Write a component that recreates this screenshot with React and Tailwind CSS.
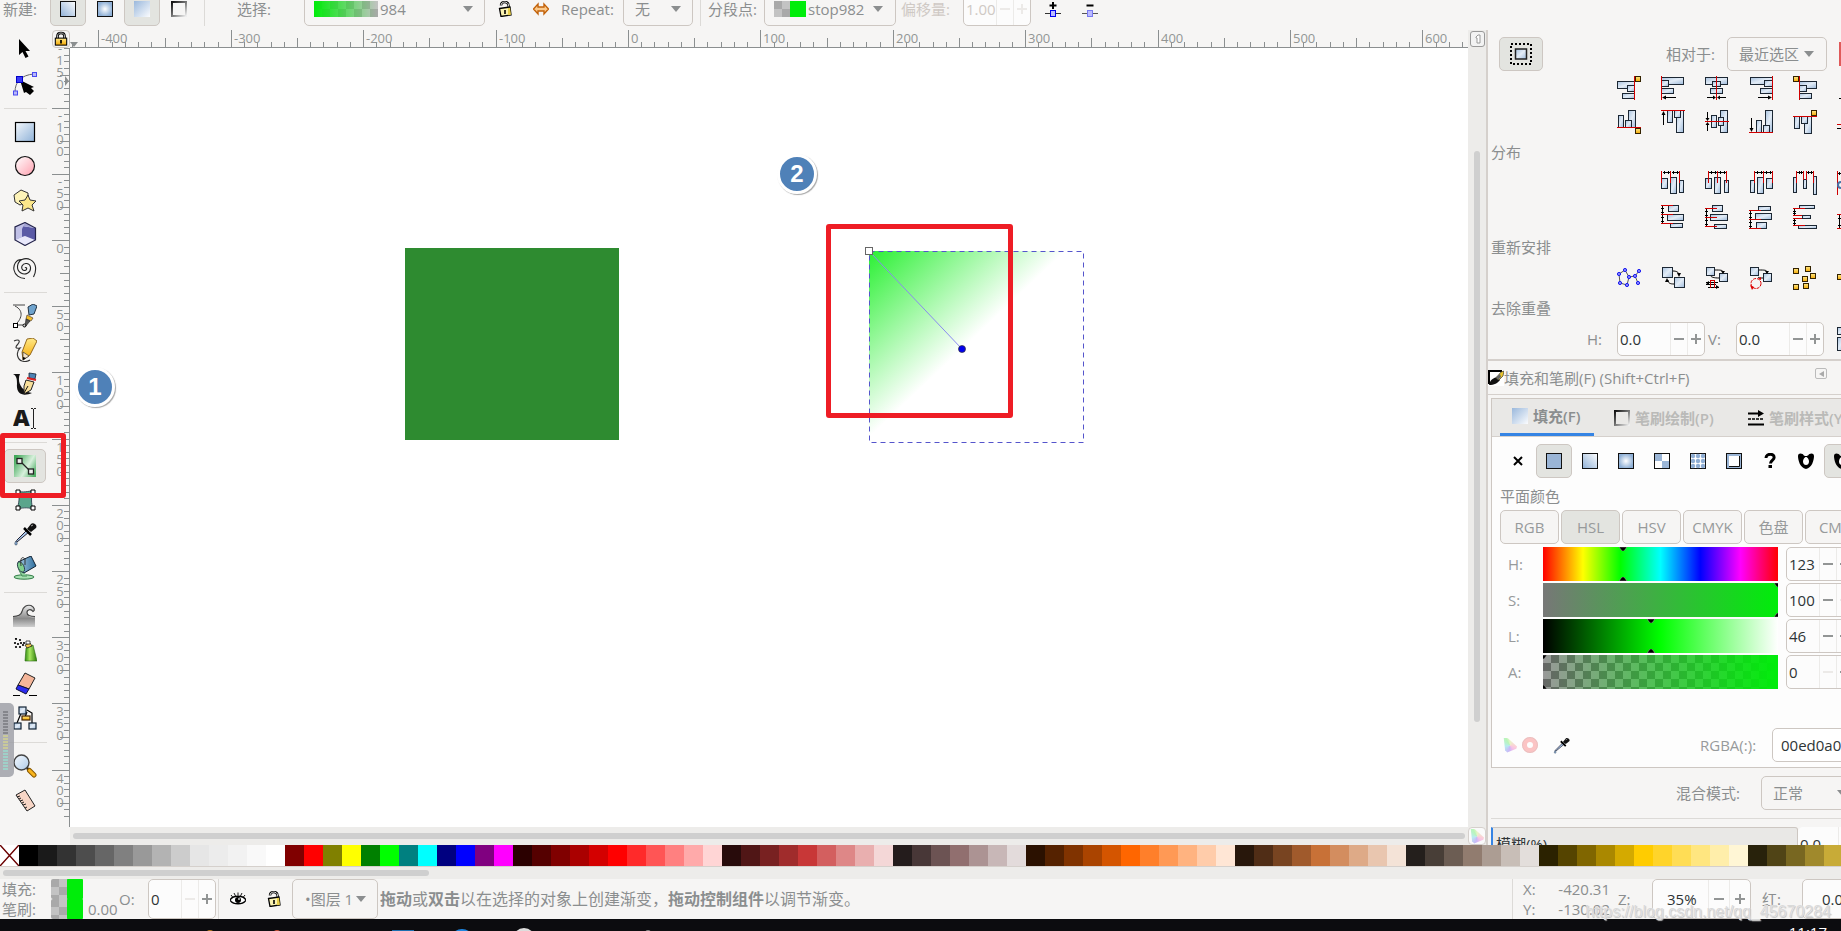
import React from "react";

/* ---------- shared pieces ---------- */

function Caret() {
  return (
    <svg className="pointer-events-none shrink-0" width="10" height="6" viewBox="0 0 10 6" aria-hidden="true">
      <path d="M0 0h10L5 6z" fill="#8b8e8f" />
    </svg>
  );
}

function Combo({ label, value, options, chip, className, selectClass }) {
  return (
    <div className={"flex h-[34px] shrink-0 items-center rounded-[5px] border border-[#cdc7c2] bg-[#f6f5f4] " + className}>
      {chip}
      <select aria-label={label} defaultValue={value} className={"min-w-0 appearance-none bg-transparent text-[15px] outline-none " + selectClass}>
        {(options || [value]).map((o) => (
          <option key={o}>{o}</option>
        ))}
      </select>
      <Caret />
    </div>
  );
}

function Spin({ label, value, className, step, minusOff, plusOff, disabled }) {
  return (
    <div className={"flex shrink-0 items-stretch overflow-hidden rounded-[5px] border border-[#cdc7c2] bg-[#fcfcfc] " + className}>
      <input
        aria-label={label}
        defaultValue={value}
        disabled={disabled}
        className={"w-0 min-w-0 flex-1 bg-transparent pl-[2px] text-[15px] outline-none " + (disabled ? "text-[#cfc9c4]" : "text-[#2e3436]")}
      />
      <button aria-label={"decrease " + label} className={"flex shrink-0 items-center justify-center border-l border-[#ecebe9] " + step}>
        <svg width="10" height="10" viewBox="0 0 10 10"><path d="M0 5h10" stroke={minusOff ? "#eceae8" : "#929595"} strokeWidth="2" /></svg>
      </button>
      <button aria-label={"increase " + label} className={"flex shrink-0 items-center justify-center border-l border-[#ecebe9] " + step}>
        <svg width="10" height="10" viewBox="0 0 10 10"><path d="M0 5h10M5 0v10" stroke={plusOff ? "#eceae8" : "#929595"} strokeWidth="2" /></svg>
      </button>
    </div>
  );
}

function Defs() {
  return (
    <svg width="0" height="0" className="absolute" aria-hidden="true">
      <defs>
        <linearGradient id="blueDiag" x1="0" y1="0" x2="1" y2="1"><stop offset="0" stopColor="#f4f8fc" /><stop offset="1" stopColor="#8fb2d8" /></linearGradient>
        <linearGradient id="blueFade" x1="0" y1="0" x2="1" y2="1"><stop offset="0" stopColor="#9ab8dc" /><stop offset="1" stopColor="#fbfcfe" /></linearGradient>
        <linearGradient id="blueLin" x1="0" y1="1" x2="1" y2="0"><stop offset="0" stopColor="#8fb0d6" /><stop offset="1" stopColor="#ffffff" /></linearGradient>
        <linearGradient id="grayLin" x1="0" y1="0" x2="1" y2="1"><stop offset="0" stopColor="#111" /><stop offset="0.5" stopColor="#777" /><stop offset="1" stopColor="#eee" /></linearGradient>
        <radialGradient id="blueRad"><stop offset="0" stopColor="#ffffff" /><stop offset="1" stopColor="#8fb0d6" /></radialGradient>
        <linearGradient id="bar" x1="0" y1="0" x2="1" y2="1"><stop offset="0" stopColor="#a9c3e0" /><stop offset="0.5" stopColor="#e3ecf6" /><stop offset="1" stopColor="#9dbadb" /></linearGradient>
        <linearGradient id="gold" x1="0" y1="0" x2="0" y2="1"><stop offset="0" stopColor="#ffe98a" /><stop offset="1" stopColor="#f5a800" /></linearGradient>
        <linearGradient id="pinkDiag" x1="0" y1="0" x2="1" y2="1"><stop offset="0" stopColor="#fff" /><stop offset="1" stopColor="#ff9fae" /></linearGradient>
        <linearGradient id="greenDiag" x1="0" y1="0.2" x2="1" y2="0.8"><stop offset="0" stopColor="#3fa858" /><stop offset="0.6" stopColor="#d8f0dc" /><stop offset="1" stopColor="#4fb066" /></linearGradient>
        <linearGradient id="can" x1="0" y1="0" x2="1" y2="0"><stop offset="0" stopColor="#2f8a10" /><stop offset="0.4" stopColor="#a8e860" /><stop offset="1" stopColor="#2a7a08" /></linearGradient>
        <linearGradient id="wave" x1="0" y1="0" x2="0" y2="1"><stop offset="0" stopColor="#e8e8e8" /><stop offset="0.6" stopColor="#8a8a8a" /><stop offset="1" stopColor="#cfcfcf" /></linearGradient>
        <linearGradient id="bucket" x1="0" y1="0" x2="1" y2="0"><stop offset="0" stopColor="#a8cbe4" /><stop offset="1" stopColor="#2f6f9e" /></linearGradient>
        <linearGradient id="lens" x1="0" y1="0" x2="1" y2="1"><stop offset="0" stopColor="#f6fafe" /><stop offset="1" stopColor="#aecbea" /></linearGradient>
        <pattern id="checker" width="16" height="16" patternUnits="userSpaceOnUse">
          <rect width="16" height="16" fill="#c3c3c3" /><rect width="8" height="8" fill="#a9a9a9" /><rect x="8" y="8" width="8" height="8" fill="#a9a9a9" />
        </pattern>
        <linearGradient id="chipFade"><stop offset="0" stopColor="#00ed0a" /><stop offset="1" stopColor="#00ed0a" stopOpacity="0" /></linearGradient>
        <linearGradient id="alphaFade"><stop offset="0" stopColor="#00ed0a" stopOpacity="0" /><stop offset="1" stopColor="#00ed0a" /></linearGradient>
        <pattern id="alphaChecker" width="16" height="16" patternUnits="userSpaceOnUse">
          <rect width="16" height="16" fill="#666" /><rect width="8" height="8" fill="#999" /><rect x="8" y="8" width="8" height="8" fill="#999" />
        </pattern>
        <linearGradient id="shapeFill" gradientUnits="userSpaceOnUse" x1="799" y1="203" x2="892" y2="301">
          <stop offset="0" stopColor="#2af033" /><stop offset="1" stopColor="#2af033" stopOpacity="0" />
        </linearGradient>
      </defs>
    </svg>
  );
}

function Svg({ size = 24, children, box = "0 0 24 24" }) {
  return <svg className="shrink-0" width={size} height={size} viewBox={box} fill="none" aria-hidden="true">{children}</svg>;
}

function Lock({ open, w = 16, h = 16 }) {
  return (
    <svg className="shrink-0" width={w} height={h} viewBox="0 0 16 16" fill="none" aria-hidden="true">
      {open ? (
        <g>
          <path d="M4 4.500C4 0 11 0 11.500 4L12 7" stroke="#000" strokeWidth="2.400" /><path d="M4 4.500C4 0 11 0 11.500 4L12 7" stroke="#ddd" strokeWidth="1" />
          <path d="M2.500 7.500l10.500-1.500 1 8-10 1.500z" fill="#fbf3b0" stroke="#000" strokeWidth="1.300" />
          <path d="M11 7l2-.3 1 7-3 .6z" fill="#e8cf4a" /><path d="M8 9v4" stroke="#000" strokeWidth="1.600" />
        </g>
      ) : (
        <g>
          <path d="M4 8V4.500C4 0 12 0 12 4.500V8" stroke="#000" strokeWidth="3" /><path d="M4 8V4.500C4 0 12 0 12 4.500V8" stroke="#ccc" strokeWidth="1" />
          <rect x="1.500" y="7" width="13" height="8" fill="url(#gold)" stroke="#000" strokeWidth="1.200" /><path d="M8 9v4" stroke="#000" strokeWidth="2" />
        </g>
      )}
    </svg>
  );
}

function Swatch({ kind }) {
  return (
    <Svg size={16} box="0 0 16 16">
      {kind === "flat" && <rect x=".5" y=".5" width="15" height="15" fill="#9ab5d6" stroke="#111" />}
      {kind === "linear" && <rect x=".5" y=".5" width="15" height="15" fill="url(#blueLin)" stroke="#111" />}
      {kind === "radial" && <rect x=".5" y=".5" width="15" height="15" fill="url(#blueRad)" stroke="#111" />}
      {kind === "fill" && <rect width="16" height="16" fill="url(#blueFade)" />}
      {kind === "stroke" && <rect x="1" y="1" width="14" height="14" stroke="url(#grayLin)" strokeWidth="2" />}
      {kind === "mesh" && (
        <g><rect x=".5" y=".5" width="15" height="15" fill="#fff" stroke="#111" /><path d="M1 1h7v7H1zM8 8h7v7H8z" fill="#9ab5d6" /></g>
      )}
      {kind === "pattern" && (
        <g>
          <rect x=".5" y=".5" width="15" height="15" fill="#fff" stroke="#111" />
          {[3, 8, 13].map((x) => [3, 8, 13].map((y) => <circle key={x + "-" + y} cx={x} cy={y} r="2.200" fill="#8faed4" />))}
        </g>
      )}
      {kind === "swatch" && (
        <g><rect x=".5" y=".5" width="15" height="15" fill="#9ab5d6" stroke="#111" /><rect x="3" y="3" width="10" height="10" fill="#fff" /><path d="M3 13.500h10.500V3" stroke="#111" /></g>
      )}
      {kind === "none" && <path d="M4 4l8 8M12 4l-8 8" stroke="#000" strokeWidth="2" />}
      {kind === "unknown" && (
        <g><path d="M4 5c0-5 9-5 8 0 0 2-3.500 2.500-3.500 5.500" stroke="#000" strokeWidth="3" /><rect x="6.500" y="12" width="3.500" height="3" fill="#000" /></g>
      )}
      {kind === "hole" && (
        <g><path d="M0 3C0 0 3 0 4.500 1 6 2 5.500 3 8 3s2-1 3.500-2C13 0 16 0 16 3c0 4-2 12-8 13C2 15 0 7 0 3z" fill="#000" /><path d="M8 4c-1.500 0-3 2.500-3 4.500C5 11 6.500 12 8 12s3-1 3-3.500C11 6.500 9.500 4 8 4z" fill="#fff" /></g>
      )}
    </Svg>
  );
}

function Dropper({ size = 24 }) {
  return (
    <Svg size={size}>
      <path d="M14 8L4 18c-1 1-1 3 0 2L16 10z" fill="#a9c6ea" stroke="#223" strokeWidth="1" />
      <path d="M11 6l7 7" stroke="#000" strokeWidth="2.500" /><path d="M14 7l4-5c2-2 7 1 5 4l-5 4z" fill="#111" /><path d="M18 4l2-1" stroke="#aaa" strokeWidth="1" />
      <path d="M3 19c-1.500 2-1.500 4 0 4s1.500-2 0-4z" fill="#8fb4e6" stroke="#456" strokeWidth=".8" />
    </Svg>
  );
}

/* ---------- toolbox ---------- */

const tools = [
  { name: "选择", art: <path d="M6 1v16l3.500-3 3 6 3-1.500-3-5.500H17z" fill="#000" /> },
  {
    name: "节点",
    art: (
      <g><path d="M2 20C2 10 8 3 21 2" stroke="#666" /><rect x="19.500" y=".5" width="4" height="4" fill="#b8b8f8" stroke="#4a4af0" /><rect x=".5" y="19" width="4" height="4" fill="#b8b8f8" stroke="#4a4af0" />
        <path d="M7 8l14 7-3 1 3 3-4 4-4-3-2 1z" fill="#000" /><rect x="3.500" y="4.500" width="6" height="6" fill="#3a3af5" stroke="#0000c8" /></g>
    ),
  },
  null,
  { name: "矩形", art: <rect x="2.500" y="2.500" width="19" height="19" fill="url(#blueDiag)" stroke="#000" strokeWidth="1.200" /> },
  { name: "圆形", art: <circle cx="12" cy="12" r="9.500" fill="url(#pinkDiag)" stroke="#111" strokeWidth="1.200" /> },
  {
    name: "星形",
    art: (
      <g stroke="#333" strokeWidth="1"><path d="M1 7l7-5 7 3 0 8-8 4-5-3z" fill="#fdf3b8" /><path d="M15 7l2 5 6 1-4 4 2 6-6-3-6 3 1-6-4-4 6-1z" fill="#fbe68a" /></g>
    ),
  },
  {
    name: "3D 盒子",
    art: (
      <g strokeWidth="1"><path d="M12 .5l10.500 5.500v12L12 23.500 2 18V5z" fill="#e8e8fb" /><path d="M9 4l13 2v12l-10-4-3 1z" fill="#5a5aa6" /><path d="M12 .5L2 5v13l7-3V4l13 2z" fill="#a4a4d4" /><path d="M12 .5L2 5v13l7-3V7z" fill="#c0c0e6" /><path d="M12 .5l10.500 5.500v12L12 23.500 2 18V5z" stroke="#23234a" strokeWidth="1.200" /></g>
    ),
  },
  { name: "螺旋", art: <path d="M12 12c1-1.500 2.500.5 1 2-3 1.500-5-1-4-4 2-4 8-3 8.500 1.500.5 5.500-5.500 8-9.500 5.500C2.500 13.500 4 6 9 3.500c6-2.500 12.500 1 13.500 7.500.5 3.500-.5 7-2 10M9 3.500C3 3 0 9 1 14c1 5 5.500 8.500 11 8.500" stroke="#222" strokeWidth="1.100" /> },
  null,
  {
    name: "钢笔",
    art: (
      <g><path d="M0 1h12M2 2c10 5 6 14 0 19h12" stroke="#444" /><rect x=".5" y="19.500" width="4" height="4" fill="#fff" stroke="#000" /><circle cx="11.500" cy="21.500" r="1.500" fill="#fff" stroke="#000" />
        <path d="M15 3l5-3 4 2-3 8-5 1z" fill="#6fa3cd" stroke="#234" /><path d="M14 11l6 3-2 3-5-2z" fill="#f2bd2a" stroke="#543" strokeWidth=".7" /><path d="M13 15l4 2-5 6z" fill="#555" stroke="#222" strokeWidth=".7" /></g>
    ),
  },
  {
    name: "铅笔",
    art: (
      <g><path d="M1 3c4-2 7-1 4 3-3 3-3 5 2 4C2 15 5 22 9 23c3 1 5 1 8-1" stroke="#333" strokeWidth="1.100" /><path d="M14 1l6-1 4 3-7 14-7 5-1-8z" fill="url(#gold)" stroke="#7a4a00" strokeWidth=".8" /><path d="M10 14l6 4-6 4z" fill="#f7e3c4" stroke="#333" strokeWidth=".7" /><path d="M10 19l3 1-3 2z" fill="#000" /></g>
    ),
  },
  {
    name: "书法",
    art: (
      <g><path d="M0 2h7c-3 6 0 17 12 19-9 4-16 1-15-9C4 8 4 4 0 2z" fill="#111" /><path d="M16 1l7 1-1 5-6-1z" fill="#4c83b4" stroke="#123" strokeWidth=".8" /><path d="M14 6l9 2" stroke="#d22" strokeWidth="2" /><path d="M13 8l8 2-3 8-7 4 0-8z" fill="#f8df9a" stroke="#222" strokeWidth="1" /><path d="M11 21l4-7" stroke="#111" /></g>
    ),
  },
  {
    name: "文字",
    art: (
      <g><path d="M20.500 3v19M18 2.500h2M21 2.500h2M18 22.500h2M21 22.500h2" stroke="#222" /></g>
    ),
    letter: true,
  },
  null,
  {
    name: "渐变",
    active: true,
    art: (
      <g><rect x="1" y="1" width="22" height="22" fill="url(#greenDiag)" /><path d="M7 7l10 10" stroke="#222" strokeWidth="1.300" /><rect x="4" y="4.500" width="5" height="5" fill="#eee" stroke="#222" strokeWidth="1.300" /><rect x="15.500" y="15" width="5" height="5" fill="#eee" stroke="#222" strokeWidth="1.300" /></g>
    ),
  },
  {
    name: "网格",
    art: (
      <g><path d="M5 3c5 2 10 0 15 0-2 6-2 12 0 18-6-2-11-1-16 0 2-6 3-12 1-18z" fill="#5aa58c" stroke="#234" strokeWidth=".8" /><path d="M3 2h4v4H3zM18 2h4v4h-4zM3 18h4v4H3zM18 18h4v4h-4z" fill="#fff" stroke="#000" /></g>
    ),
  },
  { name: "取色", dropper: true },
  {
    name: "填充",
    art: (
      <g><ellipse cx="11" cy="21" rx="10" ry="2.200" fill="#a6e0b0" stroke="#2f7a44" /><path d="M5 8c0 6 2 8 4 12h5" fill="#8ed29c" stroke="#2f7a44" strokeWidth=".8" /><path d="M5 6l13-6 5 10-12 7c-4-2-6-6-6-11z" fill="url(#bucket)" stroke="#123" /><ellipse cx="8" cy="11" rx="3" ry="5.500" transform="rotate(-25 8 11)" fill="#7fcf8c" stroke="#234" strokeWidth=".8" /><path d="M8 10C7 2 9 0 12 3v6" stroke="#333" /></g>
    ),
  },
  null,
  {
    name: "调整",
    art: <g><path d="M0 13c5 0 8-1 9-5 1-5 5-7 9-6 4 2 4 5 2 6-2-3-6-2-6 1 0 3 3 5 8 4v10H0z" fill="url(#wave)" /><path d="M14 9c0-3 4-4 6-1 1 2-1 3-3 2" fill="#f6f5f4" /><path d="M0 12.500c5 0 8-1 9-5 1-5 5-7 9-6 4 2 4 5 2 6-2-3-6-2-6 1 0 3 3 4 8 4" stroke="#444" strokeWidth="1.200" /></g>,
  },
  {
    name: "喷绘",
    art: (
      <g><path d="M13 10l7-3 4 16H12z" fill="url(#can)" stroke="#2a6a10" strokeWidth=".6" /><path d="M12 7l5-2 2 3-5 2z" fill="#f5c84a" stroke="#222" strokeWidth=".8" /><path d="M13 3h4v3h-4z" fill="#fff" stroke="#222" strokeWidth=".8" />
        {[[2, 1], [6, 2], [1, 5], [4, 6], [7, 5], [10, 5], [2, 9], [6, 9], [9, 7]].map(([x, y]) => <circle key={x + "." + y} cx={x + 1} cy={y} r="1.100" fill="#000" />)}</g>
    ),
  },
  {
    name: "橡皮",
    art: (
      <g><path d="M12 1l10 5-6 11-11-4z" fill="#f4b599" stroke="#222" /><path d="M5 13l11 4-3 5L3 17z" fill="#2b2bf0" stroke="#113" /><path d="M0 23.500h7M16 23.500h8" stroke="#000" /></g>
    ),
  },
  {
    name: "连接",
    art: (
      <g><path d="M9 5L4 17M14 4l5 3v10M14 6l-2 5" stroke="#000" strokeWidth="1.200" /><rect x="6" y="1" width="7" height="7" fill="url(#bar)" stroke="#123" strokeWidth="1.200" /><rect x="1" y="17" width="7" height="6" fill="url(#bar)" stroke="#123" strokeWidth="1.200" /><rect x="16" y="17" width="7" height="6" fill="url(#bar)" stroke="#123" strokeWidth="1.200" /><rect x="9" y="10" width="8" height="4" fill="url(#gold)" stroke="#420" strokeWidth="1.200" /></g>
    ),
  },
  null,
  {
    name: "缩放",
    art: (
      <g><circle cx="8.500" cy="8.500" r="7.500" fill="url(#lens)" stroke="#444" strokeWidth="1.400" /><path d="M14 14l3 3" stroke="#222" strokeWidth="2.500" /><path d="M16.500 16.500l4.500 4.500" stroke="#8a5a00" strokeWidth="5" strokeLinecap="round" /><path d="M16.500 16.500l4.500 4.500" stroke="#f9b41c" strokeWidth="3" strokeLinecap="round" /></g>
    ),
  },
  {
    name: "测量",
    art: <g><path d="M3 7l9-5 10 16-8 5z" fill="#f8d6c6" stroke="#222" /><path d="M4 9l3-1M6 11l2-1M7 13l3-1M9 15l2-1M10 17l3-1M12 20l2-1" stroke="#222" /></g>,
  },
];

function Toolbox() {
  return (
    <nav className="flex w-[52px] shrink-0 flex-col bg-[#f6f5f4] pt-[3px]" aria-label="工具">
      {tools.map((t, i) =>
        t === null ? (
          <div key={i} className="mr-[5px] ml-1 flex h-[14px] shrink-0 items-center"><div className="h-px w-full bg-[#dcdad7]" /></div>
        ) : (
          <button
            key={i}
            aria-label={t.name}
            className={"mx-1 flex h-[34px] w-[42px] shrink-0 items-center justify-center rounded-[5px] " + (t.active ? "border border-[#cdc7c2] bg-[#e3e4e0]" : "")}
          >
            {t.dropper ? <Dropper /> : (
              <Svg>
                {t.letter && <text x="0" y="20" fontFamily="Open Sans, sans-serif" fontWeight="800" fontSize="23" fill="#1a1a1a">A</text>}
                {t.art}
              </Svg>
            )}
          </button>
        ),
      )}
    </nav>
  );
}

/* ---------- rulers ---------- */

const TEN = 13.24;

function HorizontalRuler() {
  const zero = 558;
  const marks = [];
  for (let u = -420; u <= 640; u += 10) {
    const x = Math.round(zero + (u / 10) * TEN);
    if (x < 0) continue;
    marks.push({ u, x, top: u % 100 === 0 ? 0 : u % 50 === 0 ? 8 : 12 });
  }
  return (
    <svg className="block h-[18px] w-full" fill="none">
      {marks.map((m) => <rect key={m.u} x={m.x} y={m.top} width="1" height={17 - m.top} fill="#8b8f90" />)}
      {marks.filter((m) => m.u % 100 === 0).map((m) => (
        <text key={m.u} x={m.x + 3} y="13" fontSize="13" fontFamily="Open Sans, sans-serif" fill="#929595">{m.u}</text>
      ))}
      <rect x="0" y="17" width="100%" height="1" fill="#8b8f90" />
      <path d="M0 12h8l-4 5z" fill="#8b8f90" />
    </svg>
  );
}

function VerticalRuler() {
  const zero = 192;
  const marks = [];
  for (let u = -145; u <= 435; u += 5) {
    const y = Math.round(zero + (u / 10) * TEN);
    marks.push({ u, y, left: u % 50 === 0 ? 0 : u % 25 === 0 ? 8 : 12 });
  }
  const labels = [-150, -100, -50, 0, 50, 100, 150, 200, 250, 300, 350, 400];
  return (
    <svg className="block h-full w-[18px]" fill="none">
      {marks.map((m) => <rect key={m.u} x={m.left} y={m.y} width={17 - m.left} height="1" fill="#8b8f90" />)}
      {labels.map((u) =>
        String(u).split("").map((c, i) => (
          <text key={u + "-" + i} x="8" y={Math.round(zero + (u / 10) * TEN) + 13 + i * 12 - (u < 0 ? 1 : 0)} textAnchor="middle" fontSize="13" fontFamily="Open Sans, sans-serif" fill="#929595">{c}</text>
        )),
      )}
      <rect x="17" y="0" width="1" height="100%" fill="#8b8f90" />
      <path d="M13 28v10l4-5z" fill="#8b8f90" />
    </svg>
  );
}

/* ---------- canvas ---------- */

function Badge({ n, className }) {
  return (
    <div className={"absolute flex h-10 w-10 items-center justify-center rounded-full border-3 border-white bg-[#4f81b8] text-[24px] font-bold text-white shadow-[1px_1px_1px_rgba(0,0,0,0.35)] [font-family:'Liberation_Sans',sans-serif] " + className}>
      {n}
    </div>
  );
}

function CanvasArea() {
  return (
    <section className="flex min-w-0 flex-1 flex-col" aria-label="画布">
      <div className="flex h-[18px] shrink-0 bg-[#f6f5f4]">
        <button aria-label="锁定参考线" className="flex w-[18px] shrink-0 items-center justify-center rounded-[4px] border border-[#cdc7c2]"><Lock w={14} h={16} /></button>
        <div className="min-w-0 flex-1"><HorizontalRuler /></div>
        <div className="w-[18px] shrink-0 bg-[#edecea] pt-px pl-[2px]">
          <button aria-label="色彩管理" className="flex h-[16px] w-[15px] items-center justify-center rounded-[3px] border border-[#999] bg-[#f3f3f3]">
            <Svg size={10} box="0 0 10 10"><path d="M3 3l2-2h2v8H4V4H3z" stroke="#999" fill="#fff" /></Svg>
          </button>
        </div>
      </div>
      <div className="flex min-h-0 flex-1">
        <div className="w-[18px] shrink-0 bg-[#f6f5f4]"><VerticalRuler /></div>
        <div className="relative min-w-0 flex-1 overflow-hidden bg-white">
          <svg className="block h-full w-full" fill="none">
            <rect x="335" y="200" width="214" height="192" fill="#2e8b30" />
            <rect x="799" y="203" width="215" height="191" fill="url(#shapeFill)" />
            <rect x="799.5" y="203.5" width="214" height="191" stroke="#5555cc" strokeDasharray="5 4" />
            <path d="M799 203l93 98" stroke="#8a8af0" />
            <rect x="795.5" y="199.500" width="7" height="7" fill="#fff" stroke="#666" />
            <circle cx="892" cy="301" r="3.500" fill="#0000f0" stroke="#333" strokeWidth=".7" />
          </svg>
          <Badge n="1" className="top-[319px] left-[5px]" />
          <Badge n="2" className="top-[106px] left-[707px]" />
          <div className="absolute top-[176px] left-[756px] h-[194px] w-[187px] rounded-[3px] border-[5px] border-[#ee1d25]" />
        </div>
        <div className="w-[18px] shrink-0 bg-[#edecea] pt-[103px]"><div className="ml-[6px] h-[571px] w-[6px] rounded-full bg-[#cfcfcf]" /></div>
      </div>
      <div className="flex h-[18px] shrink-0 bg-[#edecea]">
        <div className="w-[18px] shrink-0 bg-[#f6f5f4]" />
        <div className="flex min-w-0 flex-1 items-center px-[3px]"><div className="h-[6px] w-full rounded-full bg-[#cfcfcf]" /></div>
        <button aria-label="颜色" className="flex w-[18px] shrink-0 items-center justify-center rounded-[4px] border border-[#d5d0cc] bg-[#fafafa]"><Gamut /></button>
      </div>
    </section>
  );
}

function Gamut() {
  return (
    <span className="block h-[15px] w-[14px] shrink-0 bg-[conic-gradient(from_0deg,#e8f5c8,#fbd0d8_100deg,#f5c0e8_140deg,#c9b8f8_190deg,#b8ecf0_260deg,#b9f5b9_330deg,#e8f5c8)] [clip-path:polygon(5%_0,35%_5%,100%_60%,95%_75%,30%_100%,15%_85%)]" />
  );
}

/* ---------- right panel ---------- */

function Glyph({ bars = [], gold = [], red = "", black = "", children }) {
  return (
    <Svg>
      {bars.map(([x, y, w, h], i) => <rect key={i} x={x + 0.5} y={y + 0.5} width={w - 1} height={h - 1} fill="url(#bar)" stroke="#1c2733" shapeRendering="crispEdges" />)}
      {gold.map(([x, y], i) => <rect key={i} x={x + 0.5} y={y + 0.5} width="5" height="5" fill="url(#gold)" stroke="#332200" shapeRendering="crispEdges" />)}
      <path d={black} stroke="#000" shapeRendering="crispEdges" />
      <path d={red} stroke="#d00000" shapeRendering="crispEdges" />
      {children}
    </Svg>
  );
}

const blk = (d) => <path d={d} fill="#000" />;

const alignGlyphs = [
  <Glyph bars={[[0, 5, 18, 8], [10, 9, 8, 7], [5, 17, 13, 6]]} gold={[[18, 0]]} red="M17.500 0v24" />,
  <Glyph bars={[[0, 1, 23, 8], [0, 4, 8, 7], [0, 12, 13, 6]]} red="M.5 0v24" black="M3 21.500h12">{blk("M1 21.500l4-2v4z")}</Glyph>,
  <Glyph bars={[[0, 1, 23, 8], [7, 5, 9, 6], [5, 12, 13, 6]]} red="M11.500 0v24" black="M2 21.500h6M15 21.500h6">{blk("M11 21.500l-3-2v4zM12 21.500l3-2v4z")}</Glyph>,
  <Glyph bars={[[1, 1, 23, 8], [15, 4, 9, 7], [11, 12, 13, 6]]} red="M23.500 0v24" black="M9 21.500h12">{blk("M23 21.500l-4-2v4z")}</Glyph>,
  <Glyph bars={[[6, 5, 18, 8], [6, 9, 8, 7], [6, 17, 13, 6]]} gold={[[0, 0]]} red="M6.500 0v24" />,
  <Glyph black="M2 22.500h8" />,
  <Glyph bars={[[1, 5, 6, 13], [11, 0, 8, 18], [8, 10, 7, 8]]} gold={[[18, 18]]} red="M0 17.500h24" />,
  <Glyph bars={[[6, 0, 6, 13], [15, 0, 8, 23], [13, 0, 7, 8]]} red="M0 .5h24" black="M2.500 3v12">{blk("M2.500 1l2 4h-4z")}</Glyph>,
  <Glyph bars={[[6, 5, 6, 13], [15, 0, 8, 23], [13, 7, 6, 9]]} red="M0 11.500h24" black="M2.500 2v6M2.500 15v6">{blk("M2.500 11l2-3h-4zM2.500 12l2 3h-4z")}</Glyph>,
  <Glyph bars={[[7, 10, 6, 13], [16, 0, 8, 23], [14, 15, 7, 8]]} red="M0 22.500h24" black="M2.500 8v12">{blk("M2.500 22l2-4h-4z")}</Glyph>,
  <Glyph bars={[[1, 6, 6, 13], [11, 6, 8, 18], [8, 6, 7, 8]]} gold={[[18, 0]]} red="M0 6.500h24" />,
  <Glyph red="M0 14.500h8" black="M0 18.500h8" />,
];

const distGlyphs = [
  <Glyph bars={[[0, 7, 7, 11], [9, 6, 7, 17], [18, 9, 5, 13]]} red="M.5 0v12M9.500 0v12M18.500 0v12" black="M2 1.500h7M11 1.500h7M3.500 0v3M7.500 0v3M12.500 0v3M16.500 0v3" />,
  <Glyph bars={[[0, 7, 7, 11], [9, 6, 7, 17], [19, 9, 5, 13]]} red="M3.500 0v12M12.500 0v12M21.500 0v12" black="M4 1.500h8M13 1.500h8M6.500 0v3M10.500 0v3M15.500 0v3M19.500 0v3" />,
  <Glyph bars={[[1, 9, 5, 13], [8, 6, 7, 17], [17, 7, 7, 11]]} red="M5.500 0v12M14.500 0v12M23.500 0v12" black="M6 1.500h8M15 1.500h8M8.500 0v3M12.500 0v3M17.500 0v3M21.500 0v3" />,
  <Glyph bars={[[0, 6, 4, 16], [10, 8, 4, 10], [20, 5, 4, 19]]} red="M3.500 0v12M10.500 0v9M13.500 0v9M20.500 0v12" black="M4 1.500h6M14 1.500h6M6.500 0v3M8.500 0v3M15.500 0v3M18.500 0v3" />,
  <Glyph red="M.5 0v24" black="M1 2.500h6M2.500 1v3"><circle cx="4" cy="14" r="3" stroke="#4a74a8" strokeWidth="2" /></Glyph>,
  <Glyph bars={[[7, 0, 11, 7], [6, 9, 17, 7], [9, 18, 13, 5]]} red="M0 .5h12M0 9.500h12M0 18.500h12" black="M1.500 1v8M1.500 10v8M0 3.500h3M0 7.500h3M0 12.500h3M0 16.500h3" />,
  <Glyph bars={[[7, 0, 11, 7], [5, 9, 18, 7], [9, 19, 13, 5]]} red="M0 3.500h12M0 12.500h12M0 21.500h12" black="M1.500 4v8M1.500 13v8M0 6.500h3M0 10.500h3M0 15.500h3M0 19.500h3" />,
  <Glyph bars={[[9, 1, 13, 5], [6, 8, 17, 7], [7, 17, 11, 7]]} red="M0 5.500h12M0 14.500h12M0 23.500h12" black="M1.500 6v8M1.500 15v8M0 8.500h3M0 12.500h3M0 17.500h3M0 21.500h3" />,
  <Glyph bars={[[6, 0, 16, 4], [9, 10, 9, 4], [5, 20, 19, 4]]} red="M0 3.500h12M0 10.500h9M0 13.500h9M0 20.500h12" black="M1.500 4v6M1.500 14v6M0 6.500h3M0 8.500h3M0 15.500h3M0 18.500h3" />,
  <Glyph red="M0 9.500h8M0 23.500h8" black="M2.500 10v13M1 13.500h3M1 20.500h3" />,
];

const nodes = [[2, 8], [8, 4], [12, 11], [10, 19], [3, 17], [18, 10], [22, 5], [21, 17]];
const moveGlyphs = [
  <Svg>
    <path d="M2 8l6-4 4 7-2 8-7-2zM12 11l6-1 4-5M18 10l3 7" stroke="#555" />
    {nodes.map(([x, y]) => <circle key={x + "." + y} cx={x} cy={y} r="1.600" fill="#8a8aff" stroke="#1a1af0" />)}
  </Svg>,
  <Glyph bars={[[1, 1, 11, 11], [13, 11, 11, 11]]}>
    <path d="M12 5c3 0 6 1 6 4M13 18c-4 0-6-1-6-4" stroke="#000" />{blk("M18 11l-2-4h4zM6 12l-2 4h4z")}
  </Glyph>,
  <Glyph bars={[[1, 1, 9, 9], [14, 7, 9, 9]]} black="M1 16.500h12M1 18.500h10M3 21.500h11" red="M5.500 14v8M9.500 14v8M5 14.500h5">
    <path d="M10 4c5 0 8 0 8 2M14 12c-5 0-8-1-8-2" stroke="#000" />{blk("M18 8l-2-3h4zM1 17l3-2v4zM14 21l-3-2v4z")}
  </Glyph>,
  <Glyph bars={[[1, 1, 9, 9], [14, 7, 9, 9]]}>
    <path d="M10 4c5 0 8 0 8 2M14 12c-3 0-4 0-5-1" stroke="#000" />{blk("M18 8l-2-3h4z")}
    <circle cx="7" cy="17.500" r="5" stroke="#d00" strokeDasharray="3 1" /><path d="M1 19l2 5 2-3zM9 13l3-2v3z" fill="#d00" />
  </Glyph>,
  <Glyph gold={[[0, 2], [12, 0], [17, 7], [9, 10], [0, 18], [10, 17]]} />,
  <Glyph gold={[[0, 8], [12, 8]]} />,
];

function GlyphGrid({ glyphs, cols, className }) {
  return (
    <div className={"grid shrink-0 gap-x-5 gap-y-[10px] " + cols + " " + className}>
      {glyphs.map((g, i) => <button key={i} aria-label={"排列 " + (i + 1)} className="h-6 w-6">{g}</button>)}
    </div>
  );
}

function Heading({ children }) {
  return <h2 className="mt-[7px] mb-2 flex h-[22px] shrink-0 items-center pl-[3px]">{children}</h2>;
}

function Marker({ left }) {
  return (
    <div className="pointer-events-none absolute inset-y-0 w-[8px] -translate-x-1/2" style={{ left }}>
      <svg className="absolute top-0" width="8" height="4" viewBox="0 0 8 4"><path d="M0 0h8L5 4H3z" fill="#000" stroke="#aaa" strokeWidth=".5" /></svg>
      <svg className="absolute bottom-0" width="8" height="4" viewBox="0 0 8 4"><path d="M0 4h8L5 0H3z" fill="#000" stroke="#aaa" strokeWidth=".5" /></svg>
    </div>
  );
}

const channels = [
  { k: "H", v: "123", pct: 34, bg: "bg-[linear-gradient(to_right,#f00,#ff0_17%,#0f0_33%,#0ff_50%,#00f_67%,#f0f_84%,#f00)]" },
  { k: "S", v: "100", pct: 100, bg: "bg-[linear-gradient(to_right,#777,#00ed0a)]" },
  { k: "L", v: "46", pct: 46, bg: "bg-[linear-gradient(to_right,#000,#0f0_50%,#fff)]" },
  { k: "A", v: "0", pct: 0, bg: "bg-transparent" },
];

function RightPanel() {
  return (
    <aside className="flex w-[355px] shrink-0 flex-col overflow-hidden border-l-2 border-[#d5d0cc] bg-[#f6f5f4]">
      <section className="flex shrink-0 flex-col border-b-2 border-[#d5d0cc] pt-[7px] pb-[3px]" aria-label="对齐">
        <div className="flex h-[34px] shrink-0 items-center pl-[11px]">
          <button aria-label="组" className="flex h-[34px] w-[44px] shrink-0 items-center justify-center rounded-[5px] border border-[#cdc7c2] bg-[#e3e4e0]">
            <Svg><rect x="2" y="2" width="20" height="20" stroke="#000" strokeWidth="2" strokeDasharray="2 2" /><rect x="6.500" y="7" width="11" height="10" fill="url(#bar)" stroke="#222" strokeWidth="1.500" /></Svg>
          </button>
          <label htmlFor="relative" className="ml-[123px] w-[61px] shrink-0">相对于:</label>
          <div className="flex h-[34px] w-[100px] shrink-0 items-center rounded-[5px] border border-[#cdc7c2] pl-[11px]">
            <select id="relative" className="w-[65px] appearance-none bg-transparent text-[15px] outline-none"><option>最近选区</option></select>
            <Caret />
          </div>
          <div className="ml-[12px] h-6 w-6 shrink-0 bg-[#e05a5a]" />
        </div>
        <GlyphGrid glyphs={alignGlyphs} cols="grid-cols-[repeat(6,24px)]" className="mt-[5px] pl-[129px]" />
        <Heading>分布</Heading>
        <GlyphGrid glyphs={distGlyphs} cols="grid-cols-[repeat(5,24px)]" className="pl-[173px]" />
        <Heading>重新安排</Heading>
        <GlyphGrid glyphs={moveGlyphs} cols="grid-cols-[repeat(6,24px)]" className="pl-[129px]" />
        <h2 className="mt-[7px] mb-[3px] flex h-[22px] shrink-0 items-center pl-[3px]">去除重叠</h2>
        <div className="flex h-[34px] shrink-0 items-center pl-[99px]">
          <span className="w-[30px] shrink-0">H:</span>
          <Spin label="H" value="0.0" step="w-[17px]" className="h-[34px] w-[88px]" />
          <span className="w-[31px] shrink-0 pl-[3px]">V:</span>
          <Spin label="V" value="0.0" step="w-[17px]" className="h-[34px] w-[88px]" />
          <span className="ml-[13px] shrink-0"><Glyph bars={[[0, 0, 8, 8], [0, 10, 8, 14]]} /></span>
        </div>
      </section>

      <header className="flex h-[34px] shrink-0 items-center border-b border-[#d5d0cc]">
        <Svg size={16} box="0 0 16 16"><path d="M0 0h16v16H0z" fill="#fff" /><path d="M0 0h14v2H2v12H0z" fill="#000" /><path d="M1 15c1-5 4-7 8-8l3 3c-2 3-6 5-11 5z" fill="#111" /><path d="M8 8l5-6 3-1-1 5-4 4z" fill="#e9c62f" stroke="#222" strokeWidth=".6" /><path d="M8 7l4-3 1 3-3 3z" fill="#666" /></Svg>
        <h2 className="w-[311px] shrink-0 whitespace-nowrap">填充和笔刷(F) (Shift+Ctrl+F)</h2>
        <button aria-label="收起" className="mb-2 flex h-[11px] w-[12px] shrink-0 items-center justify-center rounded-[2px] border border-[#bbb]">
          <svg width="5" height="6" viewBox="0 0 5 6"><path d="M5 0v6L0 3z" fill="#aaa" /></svg>
        </button>
      </header>

      <section className="mt-[3px] ml-[3px] flex shrink-0 flex-col border-t border-b border-l border-[#cdc7c2] bg-[#fdfdfd]" aria-label="填充和笔刷">
        <div role="tablist" className="flex h-[38px] shrink-0 items-stretch overflow-hidden border-b border-[#d5d0cc] bg-[#e9e8e6] pl-2 font-semibold whitespace-nowrap">
          <button role="tab" aria-selected="true" className="flex w-[94px] shrink-0 items-center gap-[5px] border-b-3 border-[#3584e4] pl-3"><Swatch kind="fill" />填充(F)</button>
          <button role="tab" className="ml-5 flex w-[134px] shrink-0 items-center gap-[5px] text-[#babab8]"><Swatch kind="stroke" />笔刷绘制(P)</button>
          <button role="tab" className="flex w-[134px] shrink-0 items-center gap-[5px] text-[#babab8]">
            <Svg size={16} box="0 0 16 16"><path d="M0 3.500h12M0 14.500h16" stroke="#000" strokeWidth="2" /><path d="M0 9h16" stroke="#000" strokeWidth="1.500" strokeDasharray="3 1" /><path d="M10 0l6 3.500L10 7z" fill="#000" /></Svg>
            笔刷样式(Y)
          </button>
        </div>
        <div className="mt-[7px] flex h-[34px] shrink-0 pl-2">
          {["none", "flat", "linear", "radial", "mesh", "pattern", "swatch", "unknown", "hole", "hole"].map((k, i) => (
            <button key={i} aria-label={k} className={"flex h-[34px] w-[36px] shrink-0 items-center justify-center rounded-[5px] " + (i === 1 || i === 9 ? "border border-[#cdc7c2] bg-[#e3e4e0]" : "")}><Swatch kind={k} /></button>
          ))}
        </div>
        <h3 className="mt-[7px] flex h-[22px] shrink-0 items-center pl-2">平面颜色</h3>
        <div className="mt-[3px] flex h-[34px] shrink-0 gap-[2px] pl-2">
          {["RGB", "HSL", "HSV", "CMYK", "色盘", "CMS"].map((m) => (
            <button key={m} className={"w-[59px] shrink-0 rounded-[5px] border border-[#cdc7c2] text-[#979a9b] " + (m === "HSL" ? "bg-[#e3e4e0]" : "bg-[#f6f5f4]")}>{m}</button>
          ))}
        </div>
        <div className="mt-[3px] flex shrink-0 flex-col gap-[2px]">
          {channels.map((c) => (
            <div key={c.k} className="flex h-[34px] items-center pl-4">
              <label htmlFor={"ch" + c.k} className="w-[35px] shrink-0 text-[#979a9b]">{c.k}:</label>
              <div className="relative h-[34px] w-[235px] shrink-0 overflow-hidden">
                {c.k === "A" && (
                  <svg className="absolute inset-0" width="235" height="34"><rect width="235" height="34" fill="url(#alphaChecker)" /><rect width="235" height="34" fill="url(#alphaFade)" /></svg>
                )}
                <input id={"ch" + c.k} type="range" defaultValue={c.pct} className={"relative block h-[34px] w-full appearance-none [&::-webkit-slider-thumb]:opacity-0 " + c.bg} />
                <Marker left={c.pct + "%"} />
              </div>
              <Spin label={c.k} value={c.v} step="w-[17px]" minusOff={c.k === "A"} plusOff={c.k === "S"} className="ml-2 h-[34px] w-[68px]" />
            </div>
          ))}
        </div>
        <div className="mt-[39px] mb-[5px] flex h-[34px] shrink-0 items-center pl-[11px]">
          <Gamut />
          <span className="ml-[5px]"><Svg size={16} box="0 0 16 16"><circle cx="8" cy="8" r="5.500" stroke="#fbc4c4" strokeWidth="5" /><circle cx="8" cy="8" r="7.500" stroke="#ddbcbc" strokeWidth=".6" /></Svg></span>
          <button aria-label="拾取颜色" className="ml-[15px] shrink-0"><Dropper size={17} /></button>
          <label htmlFor="rgba" className="ml-[130px] w-[72px] shrink-0 text-[#979a9b]">RGBA(:):</label>
          <input id="rgba" defaultValue="00ed0a00" className="h-[34px] w-[100px] shrink-0 rounded-[5px] border border-[#cdc7c2] bg-white pl-2 text-[15px] text-[#2e3436]" />
        </div>
      </section>

      <div className="mt-2 flex h-[34px] shrink-0 items-center pl-[188px]">
        <span className="w-[85px] shrink-0">混合模式:</span>
        <Combo label="混合模式" value="正常" className="w-[100px] pl-[11px]" selectClass="w-[64px]" />
      </div>
      <hr className="mt-2 ml-[3px] border-[#dcdad7]" />
      <div className="mt-2 ml-[3px] flex h-[34px] shrink-0">
        <div className="flex w-[307px] shrink-0 items-center rounded-r-[3px] border border-l-2 border-[#cdc7c2] border-l-[#3584e4] bg-[#e9e8e6] pl-[3px] text-[#2e3436]">模糊(%)</div>
        <Spin label="模糊" value="0.0" step="w-[17px]" className="h-[34px] w-[74px] border-0" />
      </div>
    </aside>
  );
}

/* ---------- palette ---------- */

const palette = (
  "000000 1a1a1a 333333 4d4d4d 666666 808080 999999 b3b3b3 cccccc e6e6e6 ececec f2f2f2 f9f9f9 ffffff " +
  "800000 ff0000 808000 ffff00 008000 00ff00 008080 00ffff 000080 0000ff 800080 ff00ff " +
  "2b0000 550000 800000 aa0000 d40000 ff0000 ff2a2a ff5555 ff8080 ffaaaa ffd5d5 " +
  "280b0b 501616 782121 a02c2c c83737 d35f5f de8787 e9afaf f4d7d7 " +
  "241c1c 483737 6c5353 916f6f ac9393 c8b7b7 e3dbdb " +
  "2b1100 552200 803300 aa4400 d45500 ff6600 ff7f2a ff9955 ffb380 ffccaa ffe6d5 " +
  "28170b 502d16 784421 a05a2c c87137 d38d5f deaa87 e9c6af f4e3d7 " +
  "241f1c 483e37 6c5d53 917c6f ac9d93 c8beb7 e3dedb " +
  "2b2200 554400 806600 aa8800 d4aa00 ffcc00 ffd42a ffdd55 ffe680 ffeeaa fff6d5 " +
  "28220b 504416 786721 a0892c c8ab37"
).split(" ");

function Palette() {
  return (
    <div className="shrink-0 bg-[#edecea]">
      <div className="flex h-[22px] overflow-hidden border-b border-[#d5d0cc]">
        <button aria-label="无" className="h-[21px] w-[19px] shrink-0 bg-white">
          <svg width="19" height="21" viewBox="0 0 19 21"><path d="M0 0l19 21M19 0L0 21" stroke="#6b0000" strokeWidth="1.500" /></svg>
        </button>
        {palette.map((c, i) => <button key={i} aria-label={"#" + c} className="h-[21px] w-[19px] shrink-0" style={{ backgroundColor: "#" + c }} />)}
      </div>
      <div className="flex h-3 items-center pl-[3px]"><div className="h-[6px] w-[426px] rounded-full bg-[#cfcfcf]" /></div>
    </div>
  );
}

/* ---------- toolbar and status bar ---------- */

function PickBox({ kind, on }) {
  return (
    <button aria-label={kind} className={"flex h-[34px] w-[36px] shrink-0 items-center justify-center rounded-[5px] " + (on ? "border border-[#cdc7c2] bg-[#e3e4e0]" : "")}><Swatch kind={kind} /></button>
  );
}

function Toolbar() {
  return (
    <header className="flex h-[30px] shrink-0 items-end overflow-hidden bg-[#f6f5f4] pb-1 whitespace-nowrap">
      <div className="flex h-[34px] shrink-0 items-center">
        <span className="w-[50px] pl-[3px]">新建:</span>
        <PickBox kind="linear" on />
        <span className="w-px" />
        <PickBox kind="radial" />
        <span className="w-px" />
        <PickBox kind="fill" on />
        <span className="w-px" />
        <PickBox kind="stroke" />
        <span className="ml-[7px] h-[34px] w-px bg-[#dcdad7]" />
        <span className="ml-8 w-[67px]">选择:</span>
        <Combo
          label="选择渐变" value="984" className="w-[181px] pl-[9px]" selectClass="ml-[2px] w-[83px]"
          chip={<svg className="shrink-0" width="64" height="16"><rect width="64" height="16" fill="url(#checker)" /><rect width="64" height="16" fill="url(#chipFade)" /></svg>}
        />
        <button aria-label="锁定渐变" className="ml-3"><Lock open /></button>
        <button aria-label="反转" className="ml-5">
          <Svg size={16} box="0 0 16 16"><path d="M.5 8L5 3v3h6V3l4.500 5L11 13v-3H5v3z" fill="#fbc98a" stroke="#c2620a" strokeWidth="1.400" /></Svg>
        </button>
        <span className="ml-3 w-[62px]">Repeat:</span>
        <Combo label="Repeat" value="无" className="w-[70px] pl-[11px]" selectClass="w-[36px]" />
        <span className="ml-[7px] h-[34px] w-px bg-[#dcdad7]" />
        <span className="ml-[7px] w-[56px]">分段点:</span>
        <Combo
          label="分段点" value="stop982" className="w-[132px] pl-[9px]" selectClass="ml-[2px] w-[65px]"
          chip={<svg className="shrink-0" width="32" height="16"><rect width="16" height="16" fill="url(#checker)" /><rect x="16" width="16" height="16" fill="#00ed0a" /></svg>}
        />
        <span className="ml-[5px] w-[62px] text-[#cfc9c4]">偏移量:</span>
        <Spin label="偏移量" value="1.00" disabled minusOff plusOff step="w-[17px]" className="h-[34px] w-[68px]" />
        <button aria-label="插入分段点" className="ml-[14px]">
          <Svg size={16} box="0 0 16 16"><path d="M0 12.500h16" stroke="#333" /><rect x="5.500" y="9.500" width="5" height="6" fill="#bcbcff" stroke="#0000f0" /><path d="M8 1v7M4.500 4.500h7" stroke="#000" strokeWidth="2" /></Svg>
        </button>
        <button aria-label="删除分段点" className="ml-[21px]">
          <Svg size={16} box="0 0 16 16"><path d="M0 12.500h16" stroke="#555" /><rect x="5.500" y="9.500" width="5" height="6" fill="#bcbcff" stroke="#7a7af0" /><path d="M4.500 4.500h7" stroke="#000" strokeWidth="2" /></Svg>
        </button>
      </div>
    </header>
  );
}

function FillChip() {
  return (
    <svg className="block shrink-0" width="32" height="20"><rect width="32" height="20" rx="2" fill="url(#checker)" /><rect x="16" width="16" height="20" rx="1" fill="#00ed0a" /></svg>
  );
}

function StatusBar() {
  return (
    <footer className="flex h-10 shrink-0 items-center overflow-hidden bg-[#f6f5f4] whitespace-nowrap">
      <div className="w-[49px] shrink-0 pl-[2px] leading-5"><div>填充:</div><div>笔刷:</div></div>
      <div className="ml-[2px] shrink-0"><FillChip /><FillChip /></div>
      <div className="ml-[5px] w-[31px] shrink-0 self-end leading-5">0.00</div>
      <label className="w-[29px] shrink-0">O:</label>
      <Spin label="不透明度" value="0" minusOff step="w-[17px]" className="h-10 w-[68px]" />
      <span className="ml-[2px] h-10 w-px shrink-0 bg-[#dcdad7]" />
      <button aria-label="显示图层" className="ml-[11px] shrink-0">
        <Svg size={16} box="0 0 16 16"><path d="M0 9c3-5 13-5 16 0-3 5-13 5-16 0z" fill="#fff" stroke="#000" strokeWidth="1.300" /><circle cx="8" cy="9" r="3" fill="#000" /><circle cx="9" cy="8" r="1" fill="#ccc" /><path d="M1 4l2 2.500M4 2l1.500 3M8 1.500v3M12 2l-1.500 3M15 4l-2 2.500" stroke="#000" strokeWidth=".9" /></Svg>
      </button>
      <button aria-label="锁定图层" className="ml-5 shrink-0"><Lock open /></button>
      <div className="ml-[10px] flex h-10 w-[86px] shrink-0 items-center rounded-[5px] border border-[#cdc7c2] pl-3">
        <select aria-label="图层" className="w-[51px] appearance-none bg-transparent text-[15px] outline-none"><option>•图层 1</option></select>
        <Caret />
      </div>
      <p className="ml-[2px] min-w-0 flex-1 overflow-hidden text-[16px]"><b>拖动</b>或<b>双击</b>以在选择的对象上创建渐变，<b>拖动控制组件</b>以调节渐变。</p>
      <div className="flex h-10 w-[329px] shrink-0 items-center border-l border-[#dcdad7] pl-[10px]">
        <div className="grid w-[87px] shrink-0 grid-cols-[30px_57px] leading-5">
          <span>X:</span><span className="text-right">-420.31</span><span>Y:</span><span className="text-right">-130.02</span>
        </div>
        <span className="ml-2 w-[34px] shrink-0">Z:</span>
        <Spin label="缩放" value="35%" step="w-[21px]" className="h-10 w-[99px] pl-3" />
        <span className="ml-[11px] w-[40px] shrink-0">红:</span>
        <Spin label="旋转" value="0.00°" step="w-[21px]" className="h-10 w-[110px] pl-[17px]" />
      </div>
    </footer>
  );
}

function Taskbar() {
  return (
    <div className="relative h-3 shrink-0 overflow-hidden bg-[#0c0c0f]">
      <svg className="absolute inset-0 h-full w-full" fill="none">
        <circle cx="210" cy="15" r="4" fill="#b8791f" /><circle cx="277" cy="16" r="5" fill="#c8543a" /><rect x="392" y="11" width="22" height="6" fill="#1d6fb0" />
        <circle cx="462" cy="22" r="12" fill="#1f86e0" /><circle cx="524" cy="20" r="11" fill="#ddd" /><circle cx="648" cy="14" r="3" fill="#888" />
      </svg>
      <span className="absolute top-[3px] right-[14px] text-[15px] leading-5 text-white">11:17</span>
    </div>
  );
}

export default function App() {
  return (
    <div className="relative flex h-screen w-full flex-col overflow-hidden bg-[#f6f5f4] text-[15px] leading-[22px] text-[#8b8e8f] [font-family:'Open_Sans','Noto_Sans_CJK_SC',sans-serif]">
      <Defs />
      <Toolbar />
      <main className="flex min-h-0 flex-1">
        <Toolbox />
        <CanvasArea />
        <RightPanel />
      </main>
      <Palette />
      <StatusBar />
      <Taskbar />

      <div className="pointer-events-none absolute top-[433px] left-0 h-[65px] w-[66px] rounded-[3px] border-[5px] border-[#ee1d25]" />
      <div className="absolute top-[703px] left-0 flex h-[74px] w-[14px] flex-col justify-center gap-px rounded-r-[5px] bg-[#9b9ca4]/80 pl-[3px]">
        {Array.from({ length: 20 }, (_, i) => (
          <span key={i} className={"h-[2px] w-[5px] " + (i < 8 ? "bg-[#85868c]" : i < 13 ? "bg-[#c9c99a]" : "bg-[#9fd0c8]")} />
        ))}
      </div>
      <div className="pointer-events-none absolute right-[10px] bottom-[9px] text-[16px] leading-5 text-[#d9d9d9] [font-family:'Liberation_Sans',sans-serif] [text-shadow:0_0_1px_#fff,1px_1px_1px_#bbb]">https://blog.csdn.net/qq_45670284</div>
    </div>
  );
}
